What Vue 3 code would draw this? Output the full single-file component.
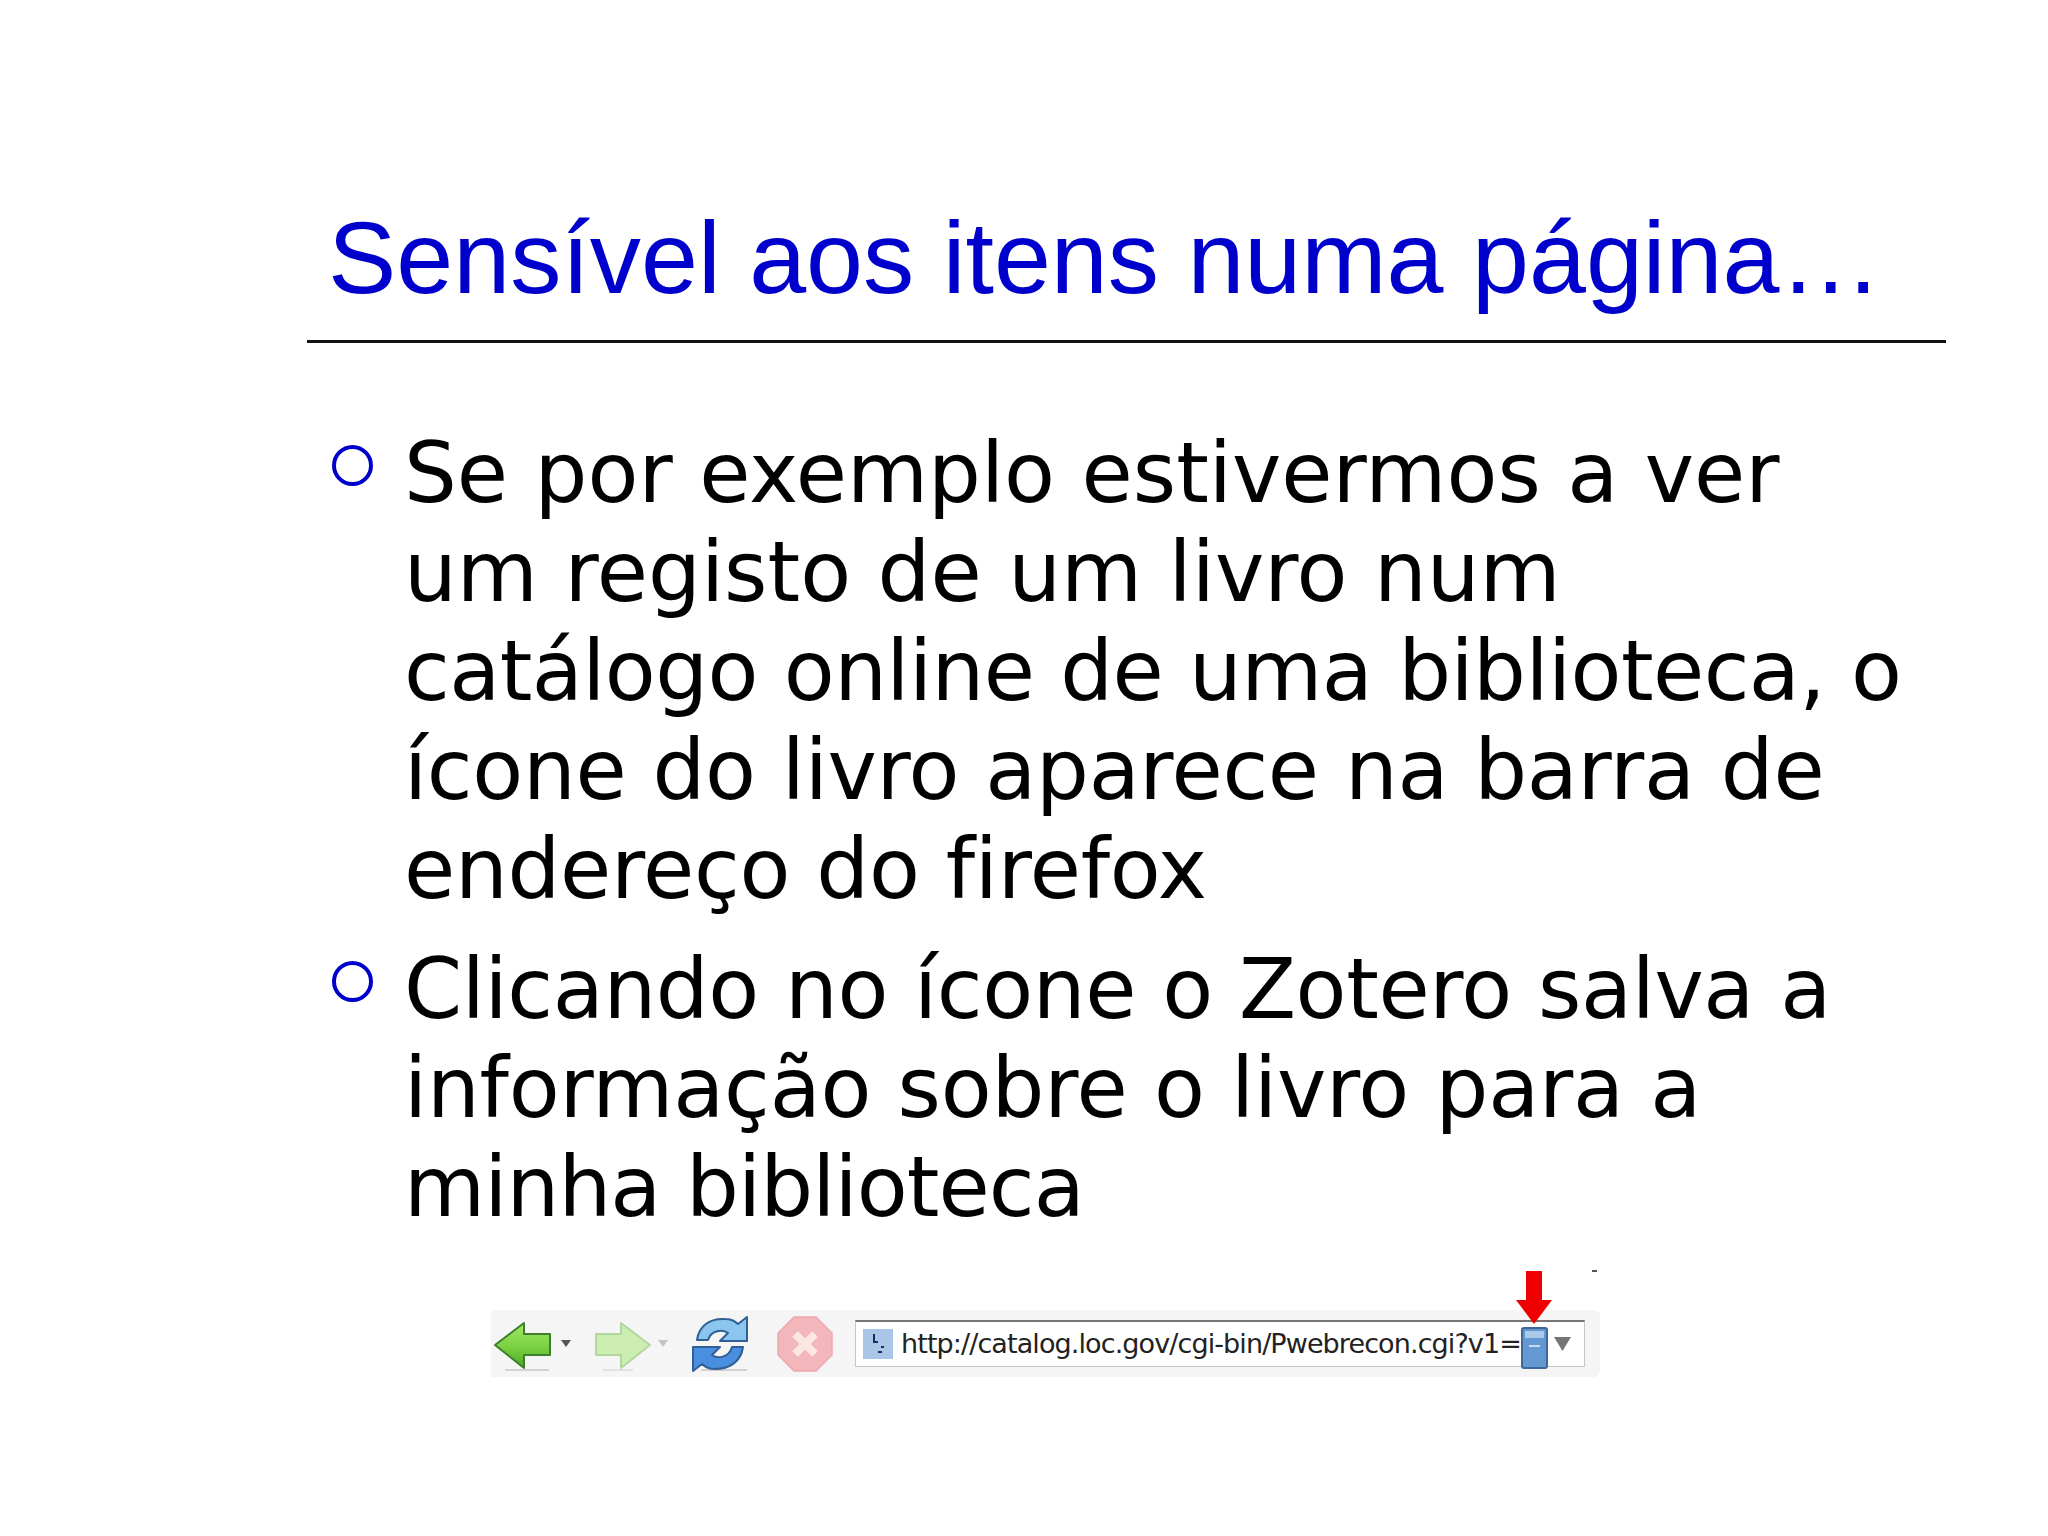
<script setup>
const items = [
  [
    { t: 'Se por exemplo estivermos a ver', ls: 0 },
    { t: 'um registo de um livro num', ls: 0 },
    { t: 'catálogo online de uma biblioteca, o', ls: -0.58 },
    { t: 'ícone do livro aparece na barra de', ls: -0.32 },
    { t: 'endereço do firefox', ls: -0.3 }
  ],
  [
    { t: 'Clicando no ícone o Zotero salva a', ls: -0.38 },
    { t: 'informação sobre o livro para a', ls: -0.17 },
    { t: 'minha biblioteca', ls: -0.9 }
  ]
]
</script>

<template>
  <div class="slide">
    <header class="head">
      <h1 class="title">Sensível aos itens numa página…</h1>
    </header>
    <ul class="list">
      <li v-for="(lines, i) in items" :key="i" class="item">
        <span class="bullet"></span>
        <span class="text">
          <span v-for="l in lines" :key="l.t" class="line" :style="{ letterSpacing: l.ls + 'px' }">{{ l.t }}</span>
        </span>
      </li>
    </ul>
    <div class="toolbar">
      <svg class="tb-arrow" width="58" height="50" viewBox="0 0 58 50">
        <defs>
          <linearGradient id="gb" x1="0" y1="0" x2="0" y2="1">
            <stop offset="0" stop-color="#a6e76a" />
            <stop offset="0.55" stop-color="#78d040" />
            <stop offset="1" stop-color="#4ea524" />
          </linearGradient>
        </defs>
        <path d="M12 51 H56" stroke="#d2d2d2" stroke-width="2" />
        <path d="M2 26 L31 4 V15 H57 V36 H31 V49 Z" fill="url(#gb)" stroke="#3f7f2c" stroke-width="2" stroke-linejoin="round" />
      </svg>
      <svg class="tb-drop" width="12" height="9" viewBox="0 0 12 9"><path d="M1 1 H11 L6 8 Z" fill="#555" /></svg>
      <svg class="tb-fwd" width="56" height="50" viewBox="0 0 56 50">
        <path d="M8 51 H38" stroke="#e2e2e2" stroke-width="2" />
        <path d="M1 15 H26 V4 L55 26 L26 49 V36 H1 Z" fill="#cbeeb0" stroke="#b3d6a0" stroke-width="2" stroke-linejoin="round" />
      </svg>
      <svg class="tb-drop2" width="12" height="9" viewBox="0 0 12 9"><path d="M1 1 H11 L6 8 Z" fill="#c4c4c4" /></svg>
      <svg class="tb-reload" width="58" height="58" viewBox="0 0 58 58">
        <path d="M10 55 H56" stroke="#d2d2d2" stroke-width="2" />
        <path d="M6 25 C8 10 20 3 34 4 C40 4 45 7 47 9 L56 2 V26 H29 L37 18 C32 14 20 15 17 25 Z" fill="#8cc6ee" stroke="#2f5f94" stroke-width="2" stroke-linejoin="round" />
        <path d="M52 32 C50 47 38 54 24 54 C18 54 13 51 11 49 L2 56 V32 H29 L21 40 C26 44 38 43 41 32 Z" fill="#4a8fdf" stroke="#2f5f94" stroke-width="2" stroke-linejoin="round" />
      </svg>
      <svg class="tb-stop" width="56" height="56" viewBox="0 0 56 56">
        <path d="M17 1 H39 L55 17 V39 L39 55 H17 L1 39 V17 Z" fill="#f2b6bb" stroke="#eda9af" stroke-width="1.5" />
        <path d="M18 18 L38 38 M38 18 L18 38" stroke="#fbe8e4" stroke-width="8" />
      </svg>
      <div class="url">
        <span class="favicon">
          <svg width="30" height="30" viewBox="0 0 30 30">
            <path d="M11 5 V13 H15" fill="none" stroke="#1b2a66" stroke-width="2" />
            <path d="M18 18 H21 M15 23 H19" fill="none" stroke="#1b2a66" stroke-width="2" />
          </svg>
        </span>
        <span class="addr">http://catalog.loc.gov/cgi-bin/Pwebrecon.cgi?v1=</span>
        <svg class="book" width="27" height="42" viewBox="0 0 27 42">
          <rect x="1" y="1" width="25" height="40" rx="2" fill="#6498d2" stroke="#3f6899" stroke-width="2" />
          <rect x="4" y="4" width="19" height="7" fill="#a9c9e8" />
          <rect x="8" y="18" width="11" height="2" fill="#c5dbef" />
        </svg>
        <svg class="caret" width="17" height="14" viewBox="0 0 17 14"><path d="M0 0 H17 L8.5 14 Z" fill="#757575" /></svg>
      </div>
      <svg class="red" width="36" height="53" viewBox="0 0 36 53"><path d="M10 0 H26 V29 H36 L18 53 L0 29 H10 Z" fill="#f00000" /></svg>
      <span class="tick"></span>
    </div>
  </div>
</template>

<style>
html, body { margin: 0; background: #fff; }
</style>

<style scoped>
.slide {
  width: 2048px;
  height: 1536px;
  background: #fff;
  overflow: hidden;
  display: flex;
  flex-direction: column;
}
.head {
  margin: 199px 0 0 307px;
  width: 1639px;
  border-bottom: 3px solid #111;
  box-sizing: border-box;
  height: 144px;
}
.title {
  margin: 0 0 0 21px;
  font: 400 102.4px/118px "Liberation Sans", Arial, sans-serif;
  color: #0000cc;
  white-space: nowrap;
}
.list {
  list-style: none;
  margin: 81px 0 0 332px;
  padding: 0;
  display: flex;
  flex-direction: column;
  gap: 21px;
}
.item {
  display: flex;
  align-items: flex-start;
}
.bullet {
  width: 41px;
  height: 41px;
  box-sizing: border-box;
  border: 4.5px solid #0000cc;
  border-radius: 50%;
  margin: 21px 31px 0 0;
  flex: none;
}
.text {
  font: 400 83.3px/99px "DejaVu Sans", sans-serif;
  font-variant-ligatures: none;
  color: #000;
}
.line {
  display: block;
  white-space: nowrap;
}
.toolbar {
  position: relative;
  margin: 73px 0 0 491px;
  width: 1109px;
  height: 67px;
  background: #f5f5f5;
  border-radius: 0 6px 6px 0;
  display: flex;
  align-items: center;
  filter: blur(0.5px);
}
.toolbar svg { overflow: visible; }
.tb-arrow { margin-left: 2px; flex: none; }
.tb-drop { margin-left: 9px; flex: none; }
.tb-fwd { margin-left: 23px; flex: none; }
.tb-drop2 { margin-left: 6px; flex: none; }
.tb-reload { margin-left: 22px; flex: none; }
.tb-stop { margin-left: 28px; flex: none; }
.url {
  margin-left: 22px;
  width: 730px;
  height: 47px;
  box-sizing: border-box;
  background: #fff;
  border: 1px solid #c6c6c6;
  border-top: 2px solid #777;
  display: flex;
  align-items: center;
  flex: none;
  overflow: visible;
}
.favicon {
  margin-left: 7px;
  width: 30px;
  height: 30px;
  background: #a9c6e6;
  flex: none;
  display: flex;
}
.addr {
  margin-left: 8px;
  width: 620px;
  font: 400 27px/30px "DejaVu Sans", sans-serif;
  font-variant-ligatures: none;
  color: #222;
  white-space: nowrap;
  letter-spacing: -0.9px;
  flex: none;
}
.book { flex: none; margin-left: 0; position: relative; top: 4px; }
.caret { flex: none; margin-left: 6px; }
.red {
  position: absolute;
  left: 1025px;
  top: -39px;
}
.tick {
  position: absolute;
  left: 1101px;
  top: -40px;
  width: 5px;
  height: 2px;
  background: #555;
}
</style>
